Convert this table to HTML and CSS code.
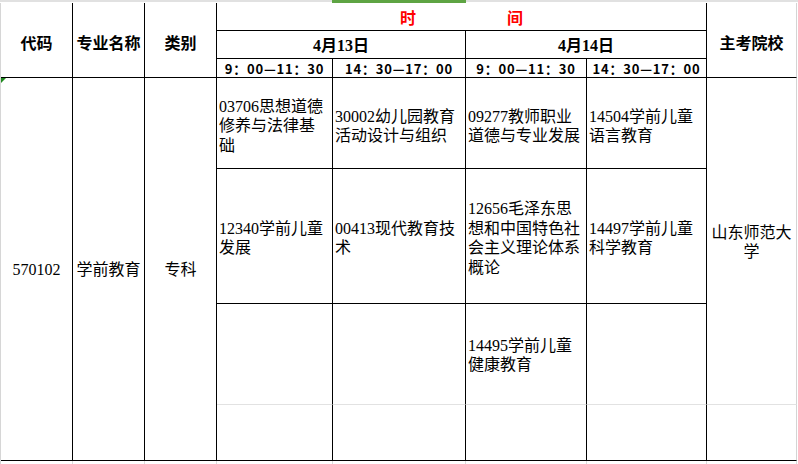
FILE: index.html
```html
<!DOCTYPE html>
<html lang="zh-CN">
<head>
<meta charset="utf-8">
<title>学前教育 考试安排</title>
<link rel="stylesheet" href="styles.css">
</head>
<body>
<div class="topbar"><div class="pad"></div><div class="sel"></div></div>
<div class="sheet">
  <div class="c hd h-code">代码</div>
  <div class="c hd h-name">专业名称</div>
  <div class="c hd h-type">类别</div>
  <div class="c time"><span>时</span><span>间</span></div>
  <div class="c hd h-school">主考院校</div>
  <div class="c date d13">4月13日</div>
  <div class="c date d14">4月14日</div>
  <div class="c slot s4">9：00—11：30</div>
  <div class="c slot s5">14：30—17：00</div>
  <div class="c slot s6">9：00—11：30</div>
  <div class="c slot s7">14：30—17：00</div>

  <div class="c big code mark">570102</div>
  <div class="c big name">学前教育</div>
  <div class="c big type">专科</div>

  <div class="c t r4 k4">03706思想道德<br>修养与法律基<br>础</div>
  <div class="c t r4 k5">30002幼儿园教育<br>活动设计与组织</div>
  <div class="c t r4 k6">09277教师职业<br>道德与专业发展</div>
  <div class="c t r4 k7">14504学前儿童<br>语言教育</div>
  <div class="c school">山东师范大<br>学</div>

  <div class="c t r5 k4">12340学前儿童<br>发展</div>
  <div class="c t r5 k5">00413现代教育技<br>术</div>
  <div class="c t r5 k6">12656毛泽东思<br>想和中国特色社<br>会主义理论体系<br>概论</div>
  <div class="c t r5 k7">14497学前儿童<br>科学教育</div>

  <div class="c t r6 k4"></div>
  <div class="c t r6 k5"></div>
  <div class="c t r6 k6">14495学前儿童<br>健康教育</div>
  <div class="c t r6 k7"></div>

  <div class="c r7 k4"></div>
  <div class="c r7 k5"></div>
  <div class="c r7 k6"></div>
  <div class="c r7 k7"></div>
  <div class="c r7 k8"></div>
</div>
<div class="foot">
  <div class="f w72"></div><div class="f w72"></div><div class="f w72"></div><div class="f w116"></div>
  <div class="f w133"></div><div class="f w121"></div><div class="f w120"></div><div class="f w90"></div>
</div>
</body>
</html>
```

FILE: styles.css
```css
html, body {
  margin: 0;
  background: #fff;
}

body {
  font-family: "Liberation Serif", "Noto Sans CJK SC", serif;
  font-size: 16px;
  color: #000;
  height: 464px;
  overflow: hidden;
}

.topbar {
  display: flex;
  height: 3px;
  background: linear-gradient(#e1e1e1 0 2px, #fff 2px);
}

.topbar .pad {
  width: 332px;
}

.topbar .sel {
  width: 134px;
  background: #5ea443;
}

.sheet {
  display: grid;
  width: max-content;
  height: 458px;
  grid-template-columns: 72px 72px 72px 116px 133px 121px 120px 90px;
  grid-template-rows: 28px 28px 19px 91px 135px 101px 56px;
  border-left: 1px solid #d6d6d6;
}

.c {
  box-sizing: border-box;
  border-right: 1px solid #000;
  border-bottom: 1px solid #000;
  display: flex;
  align-items: center;
  justify-content: center;
  text-align: center;
  line-height: 19.5px;
  white-space: nowrap;
  overflow: hidden;
}

.hd {
  font-family: "Noto Sans CJK SC", sans-serif;
  font-weight: bold;
  padding-top: 6px;
}

.h-code { grid-column: 1; grid-row: 1 / 4; }
.h-name { grid-column: 2; grid-row: 1 / 4; }
.h-type { grid-column: 3; grid-row: 1 / 4; }
.h-school {
  grid-column: 8;
  grid-row: 1 / 4;
  border-right-color: #d4d4d4;
}

.time {
  grid-column: 4 / 8;
  grid-row: 1;
  gap: 91px;
  color: #f00;
  font-family: "Noto Sans CJK SC", sans-serif;
  font-weight: bold;
  font-size: 16px;
  padding-top: 2px;
}

.date {
  grid-row: 2;
  font-weight: bold;
  padding-top: 3px;
}

.d13 { grid-column: 4 / 6; }
.d14 { grid-column: 6 / 8; }

.slot {
  grid-row: 3;
  font-family: "Noto Sans CJK SC", sans-serif;
  font-weight: bold;
  font-size: 13px;
  line-height: 16px;
  letter-spacing: 0.8px;
  padding-top: 1px;
}

.s4 { grid-column: 4; }
.s5 { grid-column: 5; }
.s6 { grid-column: 6; }
.s7 { grid-column: 7; }

.big {
  grid-row: 4 / 8;
  padding-top: 2px;
}

.code { grid-column: 1; }
.name { grid-column: 2; }
.type { grid-column: 3; }

.mark {
  position: relative;
}

.mark::before {
  content: "";
  position: absolute;
  left: 0;
  top: 0;
  width: 0;
  height: 0;
  border-top: 5px solid #1f8a1f;
  border-right: 5px solid transparent;
}

.t {
  justify-content: flex-start;
  text-align: left;
  padding-left: 2px;
}

.r4 { grid-row: 4; padding-top: 6px; }
.r5 { grid-row: 5; padding-top: 4px; }
.r6 { grid-row: 6; padding-top: 2px; border-bottom-color: #e2e2e2; }
.r7 { grid-row: 7; }

.k4 { grid-column: 4; }
.k5 { grid-column: 5; }
.k6 { grid-column: 6; }
.k7 { grid-column: 7; }
.k8 { grid-column: 8; border-right-color: #d4d4d4; }

.school {
  grid-column: 8;
  grid-row: 4 / 7;
  border-right-color: #d4d4d4;
  border-bottom-color: #e2e2e2;
  padding-top: 2px;
}

.foot {
  display: flex;
  height: 3px;
  border-left: 1px solid #d6d6d6;
}

.f {
  box-sizing: border-box;
  border-right: 1px solid #dcdcdc;
}

.w72 { width: 72px; }
.w116 { width: 116px; }
.w133 { width: 133px; }
.w121 { width: 121px; }
.w120 { width: 120px; }
.w90 { width: 90px; }
```
